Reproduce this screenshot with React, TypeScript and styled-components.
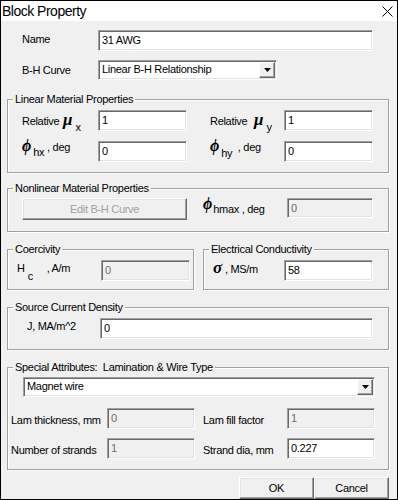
import React from 'react';
import styled, { createGlobalStyle } from 'styled-components';

const GlobalStyle = createGlobalStyle`
  html, body { margin: 0; padding: 0; background: #f0f0f0; }
  *, *::before, *::after { box-sizing: border-box; }
`;

const Window = styled.div`
  width: 398px;
  height: 500px;
  border: 1px solid #000;
  background: #f0f0f0;
  display: flex;
  flex-direction: column;
  font-family: "Liberation Sans", Arial, sans-serif;
  font-size: 11px;
  letter-spacing: -0.3px;
  color: #000;
  overflow: hidden;
`;

const TitleBar = styled.div`
  flex: none;
  height: 20px;
  background: #fff;
  display: flex;
  align-items: center;
  justify-content: space-between;
  padding: 0 4px 0 1px;
`;

const Title = styled.span`
  font-size: 14px;
  letter-spacing: -0.5px;
  line-height: 20px;
`;

const Body = styled.div`
  flex: 1;
  display: flex;
  flex-direction: column;
  padding: 9px 8px 0 6px;
`;

const Row = styled.div<{ $mt?: number; $pl?: number }>`
  display: flex;
  align-items: flex-start;
  margin-top: ${p => p.$mt ?? 0}px;
  padding-left: ${p => p.$pl ?? 0}px;
`;

const Caption = styled.span<{ $w: number; $mt: number; $ml?: number }>`
  flex: none;
  display: block;
  width: ${p => p.$w}px;
  margin-top: ${p => p.$mt}px;
  margin-left: ${p => p.$ml ?? 0}px;
  line-height: 13px;
  white-space: pre;
`;

const Greek = styled.span<{ $size?: number; $ml?: number; $dy?: number }>`
  font-family: "Liberation Serif", "DejaVu Serif", serif;
  font-weight: bold;
  font-style: italic;
  font-size: ${p => p.$size ?? 17}px;
  letter-spacing: 0;
  line-height: 0;
  margin-left: ${p => p.$ml ?? 0}px;
  vertical-align: ${p => p.$dy ?? 0}px;
`;

const Shift = styled.span<{ $dy: number; $ml?: number }>`
  line-height: 0;
  vertical-align: ${p => -p.$dy}px;
  margin-left: ${p => p.$ml ?? 0}px;
`;

const Edit = styled.input<{ $w: number; $h?: number }>`
  flex: none;
  width: ${p => p.$w}px;
  height: ${p => p.$h ?? 21}px;
  margin: 0;
  padding: 0 3px 1px;
  border: 1px solid;
  border-color: #a0a0a0 #fff #fff #a0a0a0;
  box-shadow: inset 1px 1px #696969, inset -1px -1px #e3e3e3;
  background: #fff;
  font: inherit;
  letter-spacing: inherit;
  color: #000;
  outline: none;

  &:disabled {
    background: #f0f0f0;
    color: #6d6d6d;
  }
`;

const Combo = styled.div<{ $w: number; $ml?: number }>`
  flex: none;
  width: ${p => p.$w}px;
  height: 20px;
  margin-left: ${p => p.$ml ?? 0}px;
  display: flex;
  align-items: center;
  padding: 1px 1px 1px 3px;
  border: 1px solid;
  border-color: #a0a0a0 #fff #fff #a0a0a0;
  box-shadow: inset 1px 1px #696969, inset -1px -1px #e3e3e3;
  background: #fff;
`;

const ComboText = styled.span`
  flex: 1;
  line-height: 13px;
  padding-bottom: 1px;
  white-space: nowrap;
`;

const ComboButton = styled.span`
  flex: none;
  width: 16px;
  align-self: stretch;
  display: flex;
  align-items: center;
  justify-content: center;
  background: #f0f0f0;
  border: 1px solid;
  border-color: #fff #696969 #696969 #fff;
  box-shadow: inset -1px -1px #a0a0a0;
`;

const PushButton = styled.button<{ $w: number }>`
  flex: none;
  width: ${p => p.$w}px;
  height: 22px;
  margin: 0;
  padding: 0 0 1px;
  background: #f0f0f0;
  border: 1px solid;
  border-color: #fff #696969 #696969 #fff;
  box-shadow: inset -1px -1px #a0a0a0, inset 1px 1px #e3e3e3;
  font: inherit;
  letter-spacing: inherit;
  color: #000;

  &:disabled {
    color: #a0a0a0;
  }
`;

const Group = styled.div<{ $pt: number; $pb: number; $pl: number; $w?: number; $mt?: number }>`
  position: relative;
  flex: ${p => (p.$w ? 'none' : '1')};
  width: ${p => (p.$w ? `${p.$w}px` : 'auto')};
  margin-top: ${p => p.$mt ?? 0}px;
  display: flex;
  flex-direction: column;
  padding: ${p => p.$pt}px 0 ${p => p.$pb}px ${p => p.$pl}px;
  border: 1px solid #a0a0a0;
  box-shadow: inset 1px 1px #fff, 1px 1px #fff;
`;

const Legend = styled.span`
  position: absolute;
  top: -7px;
  left: 5px;
  padding: 0 2px;
  background: #f0f0f0;
  line-height: 13px;
  white-space: pre;
`;

const GroupPair = styled.div`
  display: flex;
  gap: 9px;
  margin-top: 17px;
`;

const Stack = styled.div<{ $gap: number }>`
  display: flex;
  flex-direction: column;
  gap: ${p => p.$gap}px;
`;

const ButtonBar = styled.div`
  display: flex;
  justify-content: flex-end;
  margin-top: 7px;
`;

const CloseIcon = () => (
  <svg width="11" height="11" viewBox="0 0 11 11">
    <path d="M0.5 0.5L10.5 10.5M10.5 0.5L0.5 10.5" stroke="#000" strokeWidth="1" fill="none" />
  </svg>
);

const DropArrow = () => (
  <svg width="7" height="4" viewBox="0 0 7 4">
    <polygon points="0,0 7,0 3.5,4" fill="#000" />
  </svg>
);

const Dropdown = ({ value, w, ml }: { value: string; w: number; ml?: number }) => (
  <Combo $w={w} $ml={ml}>
    <ComboText>{value}</ComboText>
    <ComboButton>
      <DropArrow />
    </ComboButton>
  </Combo>
);

export default function App() {
  return (
    <>
      <GlobalStyle />
      <Window>
        <TitleBar>
          <Title>Block Property</Title>
          <CloseIcon />
        </TitleBar>
        <Body>
          <Row $pl={15}>
            <Caption $w={76} $mt={3}>Name</Caption>
            <Edit $w={275} defaultValue="31 AWG" />
          </Row>
          <Row $pl={15} $mt={9}>
            <Caption $w={76} $mt={4}>B-H Curve</Caption>
            <Dropdown value="Linear B-H Relationship" w={179} />
          </Row>

          <Group $mt={19} $pt={10} $pb={10} $pl={14}>
            <Legend>Linear Material Properties</Legend>
            <Stack $gap={10}>
              <Row>
                <Caption $w={76} $mt={5}>
                  Relative <Greek $ml={1}>μ</Greek>
                  <Shift $dy={6} $ml={3}>x</Shift>
                </Caption>
                <Edit $w={89} defaultValue="1" />
                <Caption $w={74} $mt={5} $ml={23}>
                  Relative <Greek $ml={4}>μ</Greek>
                  <Shift $dy={6} $ml={3}>y</Shift>
                </Caption>
                <Edit $w={89} defaultValue="1" />
              </Row>
              <Row>
                <Caption $w={76} $mt={0}>
                  <Greek $size={16}>ϕ</Greek>
                  <Shift $dy={5} $ml={2}>hx</Shift>{' , deg'}
                </Caption>
                <Edit $w={89} defaultValue="0" />
                <Caption $w={74} $mt={0} $ml={23}>
                  <Greek $size={16}>ϕ</Greek>
                  <Shift $dy={6} $ml={2}>hy</Shift>{'  , deg'}
                </Caption>
                <Edit $w={89} defaultValue="0" />
              </Row>
            </Stack>
          </Group>

          <Group $mt={15} $pt={9} $pb={8} $pl={14}>
            <Legend>Nonlinear Material Properties</Legend>
            <Row>
              <PushButton $w={165} disabled>Edit B-H Curve</PushButton>
              <Caption $w={84} $mt={5} $ml={16}>
                <Greek $size={16} $dy={4}>ϕ</Greek>
                <Shift $dy={0} $ml={1}>hmax</Shift>{' , deg'}
              </Caption>
              <Edit $w={86} $h={20} defaultValue="0" disabled />
            </Row>
          </Group>

          <GroupPair>
            <Group $w={187} $pt={10} $pb={8} $pl={9}>
              <Legend>Coercivity</Legend>
              <Row>
                <Caption $w={84} $mt={2}>
                  H<Shift $dy={8} $ml={3}>c</Shift>{'     , A/m'}
                </Caption>
                <Edit $w={89} defaultValue="0" disabled />
              </Row>
            </Group>
            <Group $pt={10} $pb={8} $pl={9}>
              <Legend>Electrical Conductivity</Legend>
              <Row>
                <Caption $w={71} $mt={3}>
                  <Greek $size={17}>σ</Greek>{' , MS/m'}
                </Caption>
                <Edit $w={89} defaultValue="58" />
              </Row>
            </Group>
          </GroupPair>

          <Group $mt={17} $pt={10} $pb={6} $pl={19}>
            <Legend>Source Current Density</Legend>
            <Row>
              <Caption $w={73} $mt={2}>J, MA/m^2</Caption>
              <Edit $w={273} defaultValue="0" />
            </Row>
          </Group>

          <Group $mt={17} $pt={9} $pb={10} $pl={3}>
            <Legend>{'Special Attributes:  Lamination & Wire Type'}</Legend>
            <Row>
              <Dropdown value="Magnet wire" w={352} ml={12} />
            </Row>
            <Row $mt={11}>
              <Caption $w={96} $mt={6}>Lam thickness, mm</Caption>
              <Edit $w={88} defaultValue="0" disabled />
              <Caption $w={84} $mt={6} $ml={8}>Lam fill factor</Caption>
              <Edit $w={88} defaultValue="1" disabled />
            </Row>
            <Row $mt={9}>
              <Caption $w={96} $mt={6}>Number of strands</Caption>
              <Edit $w={88} defaultValue="1" disabled />
              <Caption $w={84} $mt={6} $ml={8}>Strand dia, mm</Caption>
              <Edit $w={88} defaultValue="0.227" />
            </Row>
          </Group>

          <ButtonBar>
            <PushButton $w={75}>OK</PushButton>
            <PushButton $w={75}>Cancel</PushButton>
          </ButtonBar>
        </Body>
      </Window>
    </>
  );
}
